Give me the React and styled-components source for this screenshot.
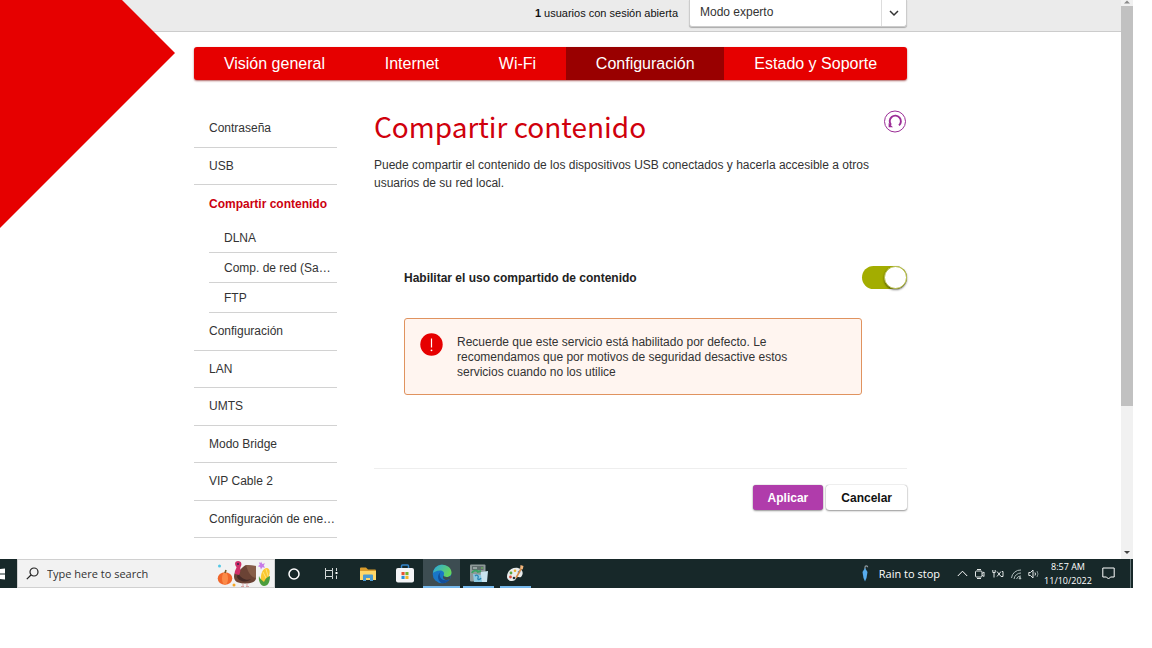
import React, { useState } from 'react';
import styled, { createGlobalStyle } from 'styled-components';

const sans = '"Liberation Sans", Arial, sans-serif';
const systemUi = '"Open Sans", "Noto Sans", sans-serif';

const GlobalStyle = createGlobalStyle`
  *, *::before { box-sizing: border-box; }
  body { margin: 0; background: #fff; color: #333; font: 12px/18px ${sans}; }
  button, input, select { font: inherit; color: inherit; }
  ul { list-style: none; margin: 0; padding: 0; }
  a { color: inherit; text-decoration: none; }
  svg { flex: none; }
`;

const Screen = styled.div`
  margin-right: 19px;
`;

const Viewport = styled.div`
  display: flex;
`;

const Page = styled.div`
  position: relative;
  flex: 1;
  min-width: 0;
`;

const Corner = styled.svg`
  position: absolute;
  top: 0;
  left: 0;
`;

const TopBar = styled.header`
  display: flex;
  justify-content: flex-end;
  align-items: flex-start;
  gap: 11px;
  height: 32px;
  padding: 0 214px 0 194px;
  background: #ebebeb;
  border-bottom: 1px solid #ccc;
`;

const Sessions = styled.span`
  font-size: 11px;
  line-height: 26px;
  color: #111;
`;

const SelectBox = styled.label`
  position: relative;
  width: 218px;
  height: 27px;
  background: #fff;
  border: 1px solid #ccc;
  border-top: 0;
  border-radius: 0 0 3px 3px;
  box-shadow: 0 1px 1px #aaa;
`;

const Select = styled.select`
  appearance: none;
  width: 100%;
  height: 24px;
  padding: 0 36px 0 10px;
  border: 0;
  background: transparent;
  color: #333;
`;

const SelectArrow = styled.span`
  position: absolute;
  top: 0;
  right: 0;
  bottom: 0;
  width: 25px;
  display: flex;
  align-items: center;
  justify-content: center;
  border-left: 1px solid #ddd;
  pointer-events: none;
`;

const Content = styled.div`
  padding: 15px 214px 21px 194px;
`;

const Tabs = styled.nav`
  position: relative;
  display: flex;
  height: 33px;
  background: #e60000;
  border-radius: 3px;
  overflow: hidden;
  box-shadow: 0 1px 2px rgba(120, 0, 0, 0.6);
`;

const Tab = styled.a`
  flex: 1 1 auto;
  text-align: center;
  font-size: 16px;
  line-height: 33px;
  color: #fff;
  background: ${(p) => (p.$active ? '#990000' : 'transparent')};
`;

const Columns = styled.div`
  display: flex;
  gap: 37px;
  padding-top: 30px;
`;

const Side = styled.nav`
  flex: none;
  width: 143px;
`;

const MenuGroup = styled.ul`
  display: grid;
  grid-auto-rows: 1fr;
  min-height: ${(p) => p.$height}px;
`;

const MenuItem = styled.li`
  display: flex;
  align-items: center;
  padding-left: 15px;
  white-space: nowrap;
  border-bottom: 1px solid ${(p) => (p.$active ? 'transparent' : '#d2d2d2')};
  font-weight: ${(p) => (p.$active ? 'bold' : 'normal')};
  color: ${(p) => (p.$active ? '#cc0010' : '#333')};
`;

const SubMenu = styled.ul`
  padding-left: 15px;
`;

const SubItem = styled(MenuItem)`
  height: 30px;
`;

const Main = styled.main`
  flex: 1;
  min-width: 0;
`;

const TitleRow = styled.div`
  display: flex;
  justify-content: space-between;
  align-items: flex-start;
`;

const Title = styled.h1`
  margin: 0;
  font: 400 28px/32px "Noto Sans CJK SC", "Noto Sans", sans-serif;
  color: #d0000c;
`;

const ResetButton = styled.button`
  width: 24px;
  height: 24px;
  padding: 0;
  border: 0;
  background: none;
`;

const Intro = styled.p`
  margin: 14px 0 74px;
`;

const SettingRow = styled.div`
  display: flex;
  align-items: center;
  justify-content: space-between;
  padding-left: 30px;
  font-weight: bold;
  color: #222;
`;

const Switch = styled.input`
  appearance: none;
  display: flex;
  width: 45px;
  height: 23px;
  margin: 0;
  border-radius: 12px;
  background: ${(p) => (p.checked ? '#a3ad00' : '#bbb')};
  justify-content: ${(p) => (p.checked ? 'flex-end' : 'flex-start')};
  &::before {
    content: '';
    width: 23px;
    height: 23px;
    border-radius: 50%;
    border: 1px solid #b9c04d;
    background: #fff;
    box-shadow: 0 1px 2px rgba(0, 0, 0, 0.5);
  }
`;

const Notice = styled.div`
  display: flex;
  gap: 14px;
  margin: 29px 45px 73px 30px;
  padding: 14px 60px 14px 15px;
  border: 1px solid #e0935f;
  border-radius: 3px;
  background: #fff5f0;
  line-height: 15px;
`;

const NoticeText = styled.p`
  margin: 2px 0 0;
`;

const Actions = styled.div`
  display: flex;
  justify-content: flex-end;
  gap: 3px;
  padding-top: 16px;
  border-top: 1px solid #eee;
`;

const Button = styled.button`
  height: 25px;
  padding: 0 15px;
  border: 0;
  border-radius: 3px;
  font-weight: bold;
  color: ${(p) => (p.$primary ? '#fff' : '#111')};
  background: ${(p) => (p.$primary ? '#b03cab' : '#fff')};
  box-shadow: 0 0 1px #888, 0 1px 2px #999;
`;

const Scrollbar = styled.div`
  display: flex;
  flex-direction: column;
  width: 12px;
  background: #f1f1f1;
`;

const Thumb = styled.div`
  flex: 400;
  background: #c1c1c1;
`;

const Track = styled.div`
  flex: 141;
`;

const Taskbar = styled.footer`
  display: flex;
  height: 29px;
  background: #172829;
  color: #fff;
  font-family: ${systemUi};
  font-size: 11px;
`;

const StartButton = styled.button`
  width: 17px;
  padding: 0;
  border: 0;
  background: none;
  display: flex;
  align-items: center;
`;

const SearchBox = styled.label`
  display: flex;
  align-items: center;
  gap: 8px;
  width: 258px;
  padding: 0 3px 0 8px;
  background: #f2f2f2;
  border: 1px solid #d0d0d0;
  color: #333;
`;

const SearchInput = styled.input`
  flex: 1;
  min-width: 0;
  padding: 0;
  border: 0;
  background: none;
  &::placeholder { color: #333; opacity: 1; }
`;

const AppButton = styled.button`
  display: flex;
  align-items: center;
  justify-content: center;
  width: 37px;
  padding: 0;
  border: 0;
  background: ${(p) => (p.$active ? '#3d4d52' : 'none')};
  box-shadow: ${(p) => (p.$active ? 'inset 0 -2px #76b9ed' : 'none')};
`;

const RunningApp = styled(AppButton)`
  width: 31px;
  margin: 0 3px;
  box-shadow: inset 0 -2px #76b9ed;
`;

const Tray = styled.div`
  display: flex;
  align-items: center;
  margin-left: auto;
  padding-right: 2px;
`;

const Weather = styled.div`
  display: flex;
  align-items: center;
  gap: 10px;
  margin-right: 17px;
`;

const TrayIcons = styled.div`
  display: flex;
  align-items: center;
  gap: 6px;
`;

const Clock = styled.div`
  width: 48px;
  margin: 0 10px 0 4px;
  font-size: 9px;
  line-height: 14px;
  text-align: center;
  white-space: nowrap;
`;

const DesktopEdge = styled.span`
  width: 1px;
  align-self: stretch;
  margin-left: 15px;
  background: #66777a;
`;

const tabs = ['Visión general', 'Internet', 'Wi-Fi', 'Configuración', 'Estado y Soporte'];
const upper = ['Contraseña', 'USB', 'Compartir contenido'];
const shared = ['DLNA', 'Comp. de red (Sa…', 'FTP'];
const lower = ['Configuración', 'LAN', 'UMTS', 'Modo Bridge', 'VIP Cable 2', 'Configuración de ene…'];

function ResetIcon() {
  return (
    <svg width="24" height="24" viewBox="0 0 24 24" fill="none" stroke="#9b2d96">
      <circle cx="12" cy="11.5" r="10.5" />
      <path d="M16 15.400A5.600 5.600 0 1 0 8 14.800" strokeWidth="1.900" />
      <path d="M5.600 13V17.200H10z" fill="#9b2d96" stroke="none" />
    </svg>
  );
}

function AlertIcon() {
  return (
    <svg width="23" height="23" viewBox="0 0 23 23">
      <circle cx="11.5" cy="11.5" r="11.2" fill="#e60000" />
      <path d="M11.5 5.500v9" stroke="#fff" strokeWidth="1.200" />
      <circle cx="11.5" cy="17.300" r=".9" fill="#fff" />
    </svg>
  );
}

function HarvestArt() {
  return (
    <svg width="54" height="27" viewBox="0 0 54 27">
      <circle cx="2.5" cy="6" r="1.5" fill="#52c7e5" />
      <path d="M44 1.500l1.300 2.400 2.700-.7-1.300 2.300 1.300 2.300-2.700-.6-1.300 2.300-.9-2.600-2.300-.6 2-1.600-.9-2.300 2 .4z" fill="#c77be8" />
      <circle cx="17" cy="25" r="1.5" fill="#f6a623" />
      <ellipse cx="8" cy="18.500" rx="7.300" ry="6.200" fill="#f0662a" />
      <ellipse cx="8" cy="18.500" rx="3" ry="6.200" fill="#fb8a47" />
      <path d="M8 13l1-3" stroke="#7a5a28" strokeWidth="1.6" />
      <path d="M20 11c3 0 5-4 9-6l10 1v12c0 4-5 5.500-11 5.500-7 0-11-2-11-7 0-3 1-4.500 3-5.500z" fill="#6b4335" />
      <path d="M29 5l10 1v12c-4 0-8-5-10-13z" fill="#865d48" />
      <path d="M21 13c3 6 9 8 13 6-3 4-12 3-14-2z" fill="#452b27" />
      <path d="M18 14c-1-3 1.500-5 1.500-7C17 4 18 1 21 1c4 0 4 4 2.500 6-.5 2 .5 5-1.500 8z" fill="#cf2f68" />
      <circle cx="21" cy="4" r="1" fill="#342050" />
      <path d="M26 23v3.500M30 23v3.500M24 26.500h3M29 26.500h3" stroke="#d9a3a3" />
      <path d="M44 22c-1-6 1-14 6-14 5 1 2 10-1 15z" fill="#fcc830" />
      <path d="M46 12l4 8M49 9l2 7" stroke="#ffe37b" />
      <path d="M42 16c1 3 3 4 5 6 1-3 3-5 6-6 0 6-2 10-6 10-3 0-6-5-5-10z" fill="#4d9d3c" />
    </svg>
  );
}

function FolderIcon() {
  return (
    <svg width="18" height="16" viewBox="0 0 18 16">
      <path d="M1 2.500q0-1 1-1h5l2 2h7q1 0 1 1V14H1z" fill="#d99b2b" />
      <path d="M1 5h16v9H1z" fill="#ffd768" />
      <path d="M4 15V9.500q0-1 1-1h8q1 0 1 1V15h-3v-3H7v3z" fill="#4c9bd0" />
    </svg>
  );
}

function StoreIcon() {
  return (
    <svg width="18" height="19" viewBox="0 0 18 19">
      <path d="M5.500 5V2q0-1 1-1h5q1 0 1 1v3" fill="none" stroke="#3384c9" strokeWidth="1.500" />
      <rect y="4" width="18" height="14.500" rx="2" fill="#f4f5f7" />
      <path d="M5.500 8H8.600v3.100H5.500z" fill="#e65332" />
      <path d="M9.400 8h3.100v3.100H9.400z" fill="#74b42d" />
      <path d="M5.500 11.900h3.100V15H5.500z" fill="#2791db" />
      <path d="M9.400 11.900h3.100V15H9.400z" fill="#f4b72c" />
    </svg>
  );
}

function EdgeIcon() {
  return (
    <svg width="20" height="20" viewBox="0 0 20 20">
      <defs>
        <linearGradient id="edgeTop" x1="0" x2="1" y1="0" y2="0.500">
          <stop offset="0" stopColor="#2aa6e1" />
          <stop offset="1" stopColor="#66d65d" />
        </linearGradient>
      </defs>
      <circle cx="10" cy="10" r="9.300" fill="#1976c7" />
      <path d="M1 9C2 3 6 .7 10.500.7c5 0 9 3.700 9 7.800 0 3-2.300 4.500-5 4.500-2 0-3.200-1-2.700-2 1-3-1-4.500-3.800-4.500C4.500 6.500 2 8 1 9z" fill="url(#edgeTop)" />
      <path d="M8.500 8.200c-2 3 0 8 5 8 1.800 0 3.300-.4 4.200-1-1.700 2.700-4.200 4.100-7.200 4.100-4.200-1.300-6.500-7.700-2-11.100z" fill="#124f9b" />
      <path d="M11.800 11c-.5 1 .7 2 2.700 2 1.800 0 3.200-.6 4.100-1.600.3 1.500 0 2.700-.9 3.800-4.200 2.200-8.500-.5-5.900-4.200z" fill="#3d4d52" />
    </svg>
  );
}

function DeviceIcon() {
  return (
    <svg width="20" height="19" viewBox="0 0 20 19">
      <rect x="1" y=".5" width="15.500" height="17" rx="1" fill="#8e9999" />
      <rect x="3" y="2" width="11.500" height="4" fill="#5f6c6c" />
      <path d="M4 4h4" stroke="#cfd9d9" />
      <circle cx="13" cy="4" r=".8" fill="#6fdb55" />
      <path d="M3 9c1-3 5-3 6-1M8 8l4-1" stroke="#38a264" strokeWidth="2" fill="none" />
      <path d="M12 8l7-1-1 11h-7z" fill="#c9e4ef" />
      <path d="M4 10l8 1 1 7H5z" fill="#8cc9e0" />
      <path d="M6 12c2-2 4 0 3 2s2 2 3 0" stroke="#2785b5" strokeWidth="1.300" fill="none" />
    </svg>
  );
}

function PaintIcon() {
  return (
    <svg width="19" height="19" viewBox="0 0 19 19">
      <path d="M1 13C1 7 6 3 12 4c5 1 6 6 3 9-2 1-4-1-5 1 0 2-2 3-4 3-3 0-5-2-5-4z" fill="#e9ecec" />
      <circle cx="5" cy="9" r="1.400" fill="#58a43d" />
      <circle cx="9" cy="6.700" r="1.300" fill="#e5ad30" />
      <circle cx="13" cy="8" r="1.300" fill="#4a8ed0" />
      <circle cx="4.500" cy="13" r="1.400" fill="#d84b3c" />
      <circle cx="8" cy="14" r="1.300" fill="#26353a" />
      <path d="M10 14L15.500 4" stroke="#d68c49" strokeWidth="1.600" />
      <path d="M14.200 4.500L14.500 1l3 1-.8 3.500z" fill="#f2b67d" />
    </svg>
  );
}

export default function App() {
  const [enabled, setEnabled] = useState(true);
  return (
    <>
      <GlobalStyle />
      <Screen>
        <Viewport>
          <Page>
            <TopBar>
              <Sessions><b>1</b> usuarios con sesión abierta</Sessions>
              <SelectBox>
                <Select aria-label="Modo" defaultValue="experto">
                  <option value="experto">Modo experto</option>
                </Select>
                <SelectArrow>
                  <svg width="10" height="8" viewBox="0 0 10 8" fill="none" stroke="#333" strokeWidth="1.500">
                    <path d="M1 2l4 4 4-4" />
                  </svg>
                </SelectArrow>
              </SelectBox>
            </TopBar>
            <Corner width="176" height="228" viewBox="0 0 176 228" aria-hidden="true">
              <path d="M0 0H122L175 53L0 228Z" fill="#e60000" />
            </Corner>
            <Content>
              <Tabs>
                {tabs.map((t) => (
                  <Tab key={t} href="#" $active={t === 'Configuración'}>{t}</Tab>
                ))}
              </Tabs>
              <Columns>
                <Side>
                  <MenuGroup $height={113}>
                    {upper.map((t) => (
                      <MenuItem key={t} $active={t === 'Compartir contenido'}><a href="#">{t}</a></MenuItem>
                    ))}
                  </MenuGroup>
                  <SubMenu>
                    {shared.map((t) => (
                      <SubItem key={t}><a href="#">{t}</a></SubItem>
                    ))}
                  </SubMenu>
                  <MenuGroup $height={225}>
                    {lower.map((t) => (
                      <MenuItem key={t}><a href="#">{t}</a></MenuItem>
                    ))}
                  </MenuGroup>
                </Side>
                <Main>
                  <TitleRow>
                    <Title>Compartir contenido</Title>
                    <ResetButton aria-label="Restablecer"><ResetIcon /></ResetButton>
                  </TitleRow>
                  <Intro>
                    Puede compartir el contenido de los dispositivos USB conectados y hacerla accesible a otros usuarios de su red local.
                  </Intro>
                  <SettingRow>
                    <label htmlFor="share">Habilitar el uso compartido de contenido</label>
                    <Switch id="share" type="checkbox" checked={enabled} onChange={(e) => setEnabled(e.target.checked)} />
                  </SettingRow>
                  <Notice>
                    <AlertIcon />
                    <NoticeText>
                      Recuerde que este servicio está habilitado por defecto. Le recomendamos que por motivos de seguridad desactive estos servicios cuando no los utilice
                    </NoticeText>
                  </Notice>
                  <Actions>
                    <Button $primary>Aplicar</Button>
                    <Button>Cancelar</Button>
                  </Actions>
                </Main>
              </Columns>
            </Content>
          </Page>
          <Scrollbar aria-hidden="true">
            <svg width="12" height="6" viewBox="0 0 12 6"><path d="M3 3.500h6L6 .5z" fill="#8a8a8a" /></svg>
            <Thumb />
            <Track />
            <svg width="12" height="12" viewBox="0 0 12 12"><path d="M3 4h6L6 7z" fill="#444" /></svg>
          </Scrollbar>
        </Viewport>
        <Taskbar>
          <StartButton aria-label="Start">
            <svg width="6" height="12" viewBox="0 0 6 12"><path d="M0 1l5-.5v5H0zM0 6.500h5v5L0 11z" fill="#fff" /></svg>
          </StartButton>
          <SearchBox>
            <svg width="13" height="13" viewBox="0 0 13 13" fill="none" stroke="#222" strokeWidth="1.200">
              <circle cx="8" cy="5" r="4" />
              <path d="M5 8L.8 12.200" />
            </svg>
            <SearchInput placeholder="Type here to search" aria-label="Search" />
            <HarvestArt />
          </SearchBox>
          <AppButton aria-label="Cortana">
            <svg width="12" height="12" viewBox="0 0 12 12"><circle cx="6" cy="6" r="5" fill="none" stroke="#fff" strokeWidth="1.500" /></svg>
          </AppButton>
          <AppButton aria-label="Task view">
            <svg width="14" height="13" viewBox="0 0 14 13" fill="none" stroke="#d5dada">
              <path d="M1.500 1v2.500h7V1M1.500 12V9.500h7V12M1.500 3.500v6M8.500 3.500v6M12.500 1v3M12.500 8.500V12" />
              <path d="M11.500 5h2v2h-2z" fill="#fff" stroke="none" />
            </svg>
          </AppButton>
          <AppButton aria-label="File Explorer"><FolderIcon /></AppButton>
          <AppButton aria-label="Microsoft Store"><StoreIcon /></AppButton>
          <AppButton $active aria-label="Edge"><EdgeIcon /></AppButton>
          <RunningApp aria-label="Devices"><DeviceIcon /></RunningApp>
          <RunningApp aria-label="Paint"><PaintIcon /></RunningApp>
          <Tray>
            <Weather>
              <svg width="8" height="17" viewBox="0 0 8 17" fill="none">
                <path d="M4 4V2.200Q4 .8 5.300.8T6.600 2.200" stroke="#8c989d" strokeWidth="1.200" />
                <path d="M4 3l2.500 4-1 6-1.500 3.500L2.500 13 1.500 7z" fill="#58adee" />
              </svg>
              Rain to stop
            </Weather>
            <TrayIcons>
              <svg width="11" height="7" viewBox="0 0 11 7" fill="none" stroke="#fff"><path d="M.8 6L5.500 1.200 10.200 6" /></svg>
              <svg width="12" height="12" viewBox="0 0 12 12" fill="none" stroke="#e2e6e6">
                <path d="M3 1.500h4M3 10.500h4" />
                <rect x="1.500" y="3" width="6.500" height="6" rx="1" />
                <path d="M8 5.500l2-1.500v4.500L8 7" />
              </svg>
              <svg width="12" height="10" viewBox="0 0 12 10" fill="none" stroke="#e2e6e6">
                <path d="M2 4v4.500M.8 1v2.500h2.400V1M10 2.500h1v5H9" />
                <path d="M5 2.500l4 5M9 2.500l-4 5" />
              </svg>
              <svg width="12" height="12" viewBox="0 0 12 12" fill="none" stroke="#aebbbb">
                <path d="M1.500 10A9 9 0 0 1 11 2M4 11a7 7 0 0 1 7-6M6.500 11A4.500 4.500 0 0 1 11 8" />
                <circle cx="10" cy="10.300" r=".8" fill="#fff" />
              </svg>
              <svg width="12" height="10" viewBox="0 0 12 10" fill="none" stroke="#e2e6e6">
                <path d="M.8 3.500v3h1.700L5 9V1L2.500 3.500z" />
                <path d="M7 3.500q1 1.500 0 3" />
                <path d="M9 2q2 3 0 6" stroke="#819090" />
              </svg>
            </TrayIcons>
            <Clock>8:57 AM<br />11/10/2022</Clock>
            <svg width="13" height="13" viewBox="0 0 13 13" fill="none" stroke="#fff"><path d="M.8 1h11.400v9H8.500l-2 2-2-2H.8z" /></svg>
            <DesktopEdge />
          </Tray>
        </Taskbar>
      </Screen>
    </>
  );
}
